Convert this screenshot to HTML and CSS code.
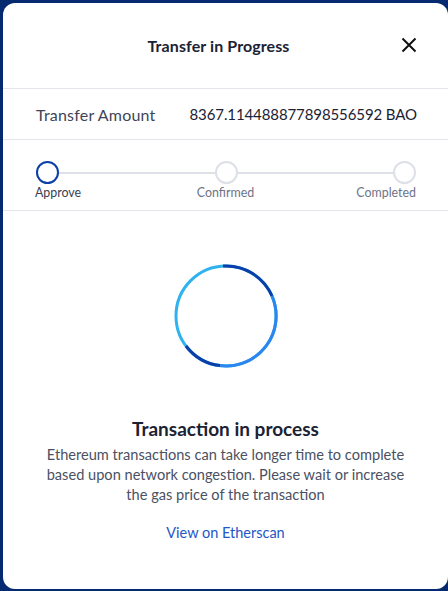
FILE: index.html
```html
<!DOCTYPE html>
<html>
<head>
<meta charset="utf-8">
<link rel="stylesheet" href="styles.css">
</head>
<body>
<div class="card">
  <div class="header">
    <div class="title">Transfer in Progress</div>
    <button class="close" aria-label="Close">
      <svg width="16" height="16" viewBox="0 0 16 16"><path d="M1.5 1.5 L14.5 14.5 M14.5 1.5 L1.5 14.5" stroke="#111" stroke-width="2" fill="none"/></svg>
    </button>
  </div>
  <div class="amount-row">
    <span class="label">Transfer Amount</span>
    <span class="value">8367.114488877898556592 BAO</span>
  </div>
  <div class="stepper">
    <div class="track">
      <div class="dot active"></div>
      <div class="line"></div>
      <div class="dot"></div>
      <div class="line"></div>
      <div class="dot"></div>
    </div>
    <div class="labels">
      <span class="step first active">Approve</span>
      <span class="step mid">Confirmed</span>
      <span class="step last">Completed</span>
    </div>
  </div>
  <div class="body">
    <svg class="spinner" width="106" height="106" viewBox="0 0 106 106">
      <circle cx="53" cy="53" r="50" fill="none" stroke="#2fb2ee" stroke-width="3"/>
      <path d="M50 3.1 A50 50 0 0 1 99 33" fill="none" stroke="#0a3ea8" stroke-width="3"/>
      <path d="M99 33 A50 50 0 0 1 47 102.6" fill="none" stroke="#2b86ee" stroke-width="3"/>
      <path d="M47 102.6 A50 50 0 0 1 13 83" fill="none" stroke="#0a3ea8" stroke-width="3"/>
    </svg>
    <div class="heading">Transaction in process</div>
    <p class="desc">Ethereum transactions can take longer time to complete based upon network congestion. Please wait or increase the gas price of the transaction</p>
    <a class="link" href="#">View on Etherscan</a>
  </div>
</div>
</body>
</html>
```
FILE: styles.css
```css
* { box-sizing: border-box; }
html, body { margin: 0; height: 100%; }
body {
  background: #062a6f;
  padding: 3px 0 2px 3px;
  font-family: "Lato", "Noto Sans", sans-serif;
}
.card {
  background: #fff;
  border-radius: 12px;
  height: 586px;
  display: flex;
  flex-direction: column;
}
.header {
  height: 86px;
  display: flex;
  align-items: center;
  justify-content: center;
  position: relative;
  border-bottom: 1px solid #e4e6ec;
}
.title {
  font-size: 16px;
  font-weight: 700;
  color: #1b2233;
  margin-left: -14px;
  letter-spacing: 0.1px;
}
.close {
  position: absolute;
  right: 31px;
  top: 34px;
  background: none;
  border: 0;
  padding: 0;
  width: 16px;
  height: 16px;
}
.close svg { display: block; }
.amount-row {
  height: 51px;
  display: flex;
  align-items: center;
  justify-content: space-between;
  padding: 0 31px 0 33px;
  border-bottom: 1px solid #e4e6ec;
  font-size: 16px;
}
.label { color: #3e4558; letter-spacing: 0.2px; }
.value { color: #1b2233; font-size: 15px; letter-spacing: -0.1px; }
.stepper {
  height: 71px;
  border-bottom: 1px solid #e4e6ec;
  padding: 21px 32px 0 33px;
}
.track {
  display: flex;
  align-items: center;
}
.dot {
  width: 23px;
  height: 23px;
  border-radius: 50%;
  border: 2px solid #dde0e7;
  flex: none;
}
.dot.active { border-color: #0a3ea8; }
.line {
  flex: 1;
  height: 2px;
  background: #dde0e7;
}
.labels {
  display: grid;
  grid-template-columns: 1fr auto 1fr;
  font-size: 12.4px;
  color: #6d7386;
  margin-top: 1px;
  margin-left: -1px;
}
.step.first { justify-self: start; }
.step.last { justify-self: end; }
.step.active { color: #3a4152; }
.body {
  display: flex;
  flex-direction: column;
  align-items: center;
  padding-top: 52px;
}
.spinner { display: block; margin-left: 0; }
.heading {
  margin-top: 48px;
  font-size: 19px;
  font-weight: 700;
  color: #1b2233;
}
.desc {
  margin: 5px 0 0;
  width: 372px;
  text-align: center;
  font-size: 14.6px;
  line-height: 20px;
  color: #4a5163;
}
.link {
  margin-top: 19px;
  font-size: 14.5px;
  color: #2456c8;
  text-decoration: none;
}
```
